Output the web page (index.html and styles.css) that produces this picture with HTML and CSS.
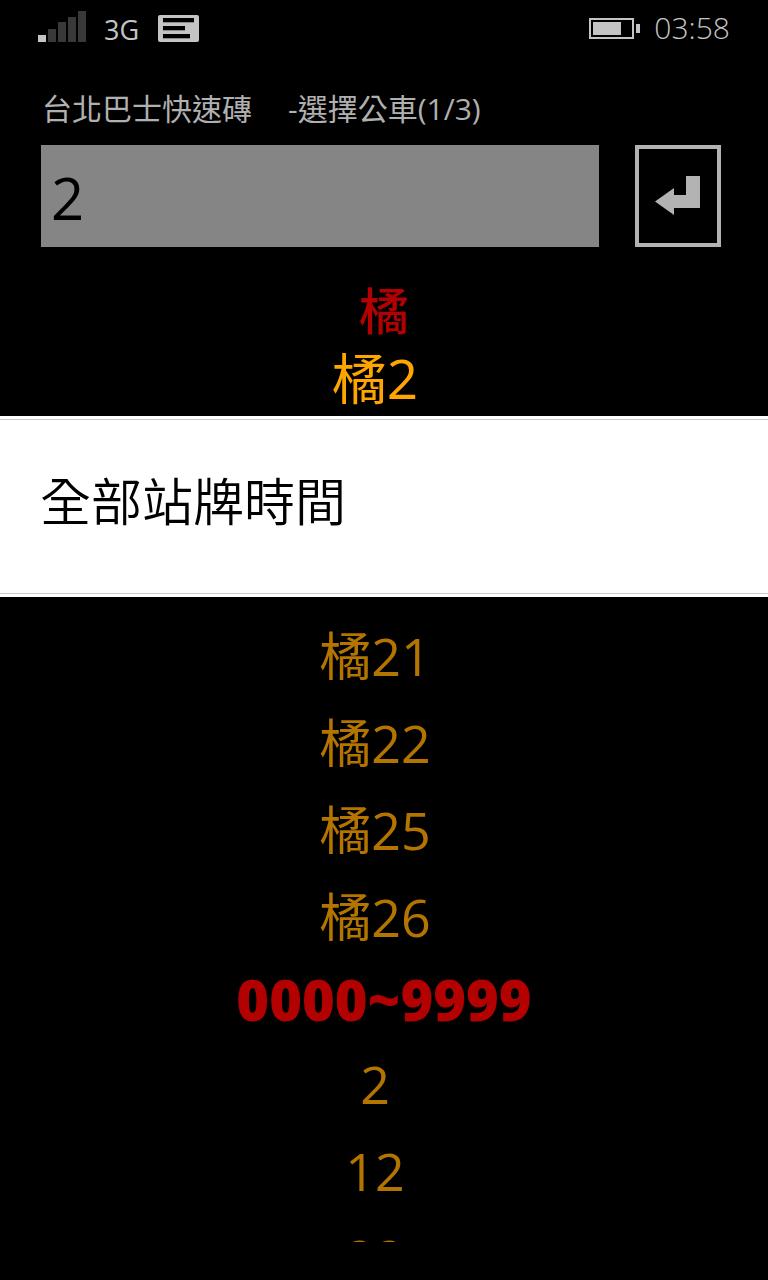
FILE: index.html
```html
<!DOCTYPE html>
<html lang="zh-Hant">
<head>
<meta charset="utf-8">
<meta name="viewport" content="width=device-width, initial-scale=1">
<title>台北巴士快速磚</title>
<link rel="stylesheet" href="styles.css">
</head>
<body>
<div class="screen">
  <header class="status">
    <svg class="signal" width="48" height="32" viewBox="0 0 48 32" aria-hidden="true">
      <path fill="#c4c4c4" d="M0 25h8v7H0z"/>
      <path fill="#393939" d="M10 19h8v13h-8zM20 12h8v20h-8zM30 7h8v25h-8zM40 1h8v31h-8z"/>
    </svg>
    <span class="network">3G</span>
    <svg class="message" width="41" height="27" viewBox="0 0 41 27" aria-hidden="true">
      <rect width="41" height="27" rx="2" fill="#c4c4c4"/>
      <path d="M5 3h31v4H5zM5 11h22v4H5zM5 19h27v4H5z"/>
      <path fill="#8a8a8a" d="M5 7h31v1H5zM5 15h22v1H5zM5 23h27v1H5z"/>
    </svg>
    <svg class="battery" width="51" height="21" viewBox="0 0 51 21" aria-hidden="true">
      <rect x="1" y="1" width="43" height="19" fill="none" stroke="#c4c4c4" stroke-width="2"/>
      <path fill="#c4c4c4" d="M4 4h28v13H4zM47 6h4v9h-4z"/>
    </svg>
    <time class="clock">03:58</time>
  </header>
  <main class="page">
    <h1 class="title"><span>台北巴士快速磚</span><span>-選擇公車(1/3)</span></h1>
    <form class="search">
      <input class="query" type="text" value="2" aria-label="公車路線">
      <button class="enter" type="button" aria-label="輸入">
        <svg width="46" height="40" viewBox="0 0 46 40" aria-hidden="true">
          <path fill="#b3b3b3" d="M0 25.500L19 12v7h12V0h14v32H19v7z"/>
        </svg>
      </button>
    </form>
    <div class="routes">
      <h2 class="group first">橘</h2>
      <a class="route selected" href="#">橘2</a>
      <div class="menu" role="menu">
        <button class="menu-item" type="button" role="menuitem">全部站牌時間</button>
      </div>
      <a class="route" href="#">橘21</a>
      <a class="route" href="#">橘22</a>
      <a class="route" href="#">橘25</a>
      <a class="route" href="#">橘26</a>
      <h2 class="group">0000~9999</h2>
      <a class="route" href="#">2</a>
      <a class="route" href="#">12</a>
      <a class="route" href="#">22</a>
    </div>
  </main>
</div>
</body>
</html>
```
FILE: styles.css
```css
* {
  box-sizing: border-box;
}

body {
  margin: 0;
  background: #000;
  font-family: "Open Sans", "Noto Sans CJK TC", sans-serif;
}

.screen {
  display: flex;
  flex-direction: column;
  height: 100vh;
  padding-bottom: 38px;
}

.status {
  display: flex;
  align-items: center;
  height: 56px;
  padding: 0 38px;
  color: #c4c4c4;
}

.signal {
  margin-bottom: 4px;
}

.network {
  margin: 2px 19px 0 18px;
  font-size: 27px;
}

.battery {
  margin-left: auto;
}

.clock {
  margin-left: 14px;
  padding-bottom: 2px;
  font-size: 30px;
  font-weight: 300;
}

.page {
  display: flex;
  flex: 1;
  flex-direction: column;
  min-height: 0;
  padding-top: 31px;
}

.title {
  display: flex;
  gap: 36px;
  margin: 0;
  padding: 0 42px;
  color: #b0b0b0;
  font-size: 30px;
  font-weight: 400;
  line-height: 44px;
}

.search {
  display: flex;
  gap: 36px;
  padding: 14px 47px 0 41px;
}

.query {
  flex: 1;
  min-width: 0;
  height: 102px;
  padding: 2px 10px 0;
  border: 0;
  border-radius: 0;
  background: #858585;
  color: #000;
  font-family: inherit;
  font-size: 58px;
}

.enter {
  display: grid;
  place-items: center;
  width: 86px;
  height: 102px;
  padding: 0;
  border: 4px solid #b3b3b3;
  background: #000;
}

.routes {
  display: flex;
  flex: 1;
  flex-direction: column;
  min-height: 0;
  margin-top: 29px;
  overflow: hidden;
}

.group,
.route {
  flex: none;
  text-align: center;
}

.group {
  margin: 0;
  padding-bottom: 2px;
  color: #b30000;
  font-size: 56px;
  font-weight: 800;
  line-height: 78px;
}

.group.first {
  padding: 0;
  font-size: 50px;
  font-weight: 500;
  line-height: 70px;
}

.route {
  padding-right: 18px;
  color: #b37400;
  font-size: 52px;
  line-height: 87px;
  text-decoration: none;
}

.route.selected {
  padding-bottom: 6px;
  color: #ffa500;
  font-size: 55px;
  line-height: 64px;
}

.menu {
  flex: none;
  margin-bottom: 15px;
  padding: 3px 0;
  background: #fff;
}

.menu-item {
  display: block;
  width: 100%;
  height: 175px;
  padding: 0 40px 16px;
  border: solid #c8c8c8;
  border-width: 1px 0;
  background: #fff;
  color: #000;
  font-family: "Noto Sans CJK TC", sans-serif;
  font-size: 51px;
  font-weight: 350;
  text-align: left;
}
```
